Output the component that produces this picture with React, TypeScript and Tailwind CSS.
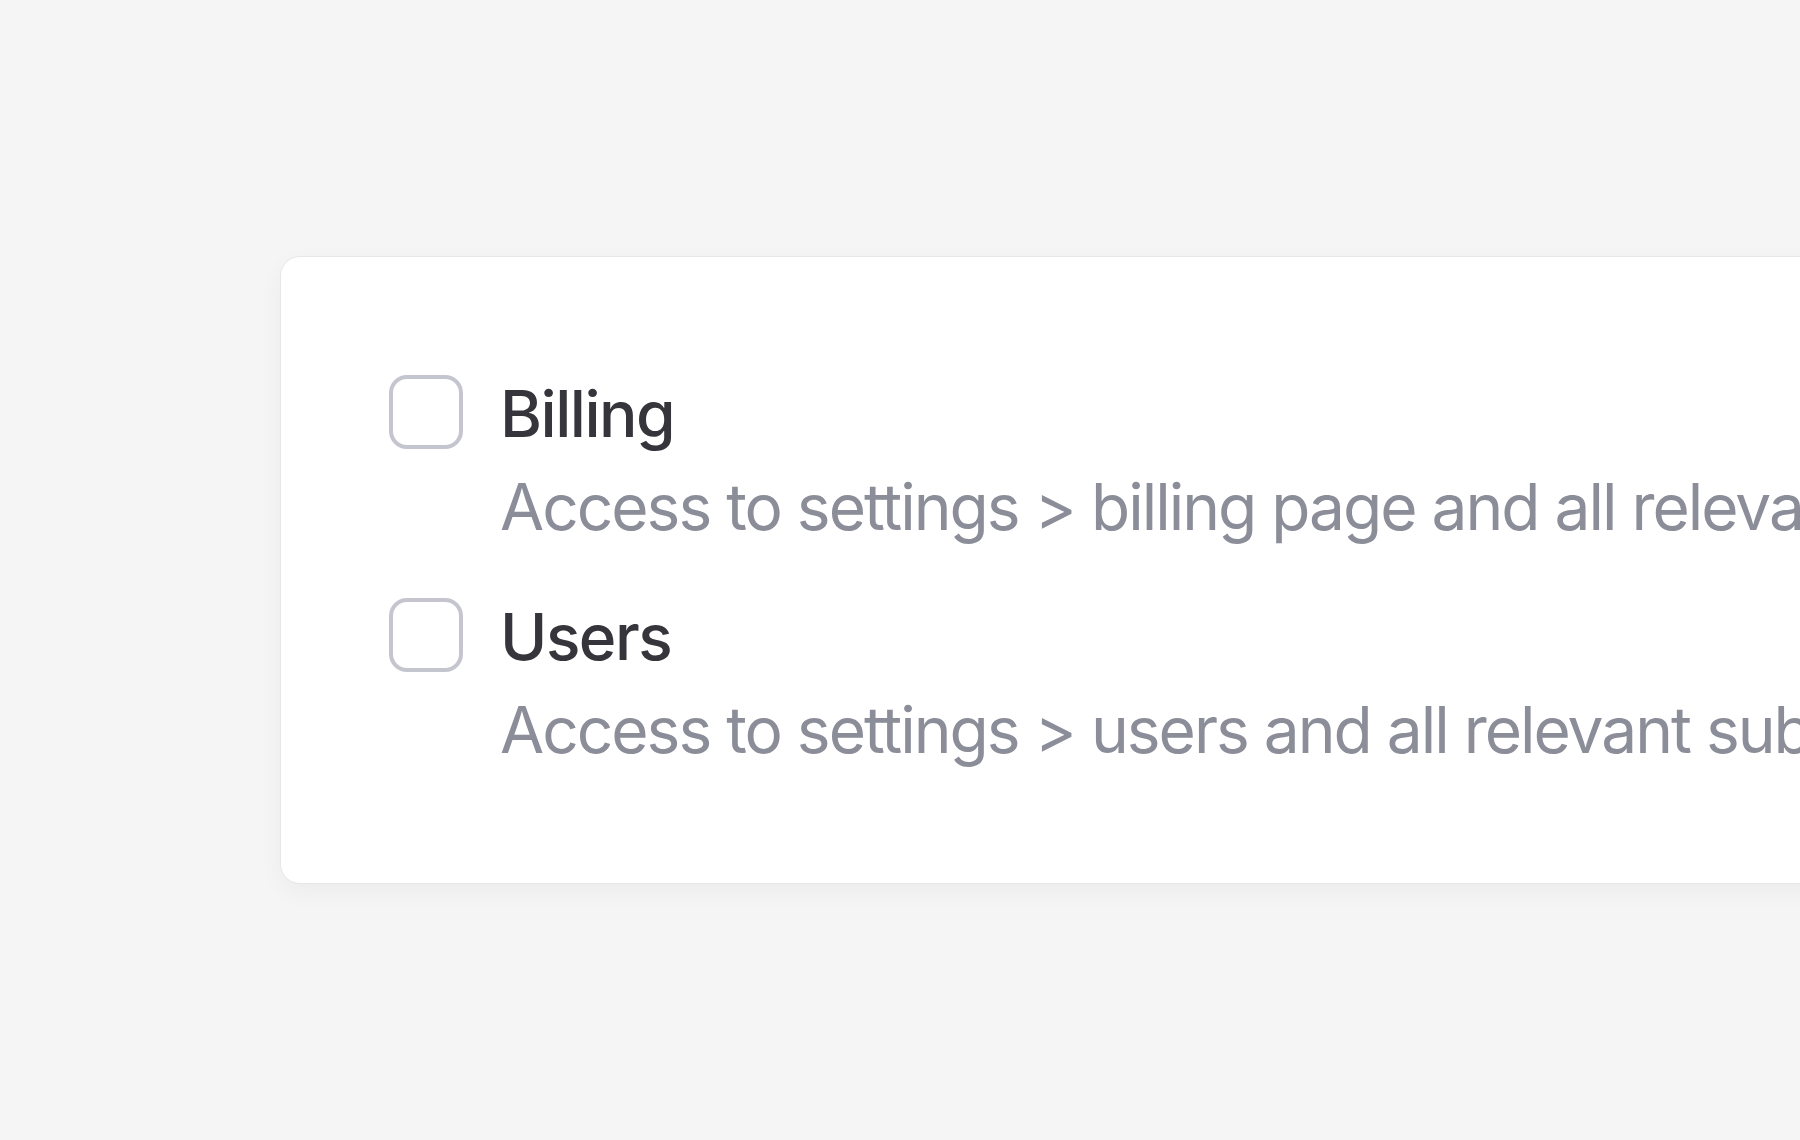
const permissions = [
  {
    title: 'Billing',
    description: 'Access to settings > billing page and all relevant subpages',
  },
  {
    title: 'Users',
    description: 'Access to settings > users and all relevant subpages',
  },
];

function PermissionRow({ title, description }: { title: string; description: string }) {
  return (
    <label className="flex items-start gap-[37px]">
      <span className="mt-[8px] h-[74px] w-[74px] shrink-0 rounded-[18px] border-[4px] border-[#c4c5cf] bg-white" />
      <span className="flex flex-col whitespace-nowrap">
        <span className="text-[64px] leading-[93px] font-medium tracking-[-1.5px] text-[#35353b]">{title}</span>
        <span className="text-[64px] leading-[93px] font-normal tracking-[-2px] text-[#8b8d98]">{description}</span>
      </span>
    </label>
  );
}

export default function App() {
  return (
    <div
      className="flex min-h-[1140px] w-full overflow-hidden bg-[#f5f5f5] pl-[280px] pt-[256px]"
      style={{ fontFamily: 'Inter, "Noto Sans", sans-serif' }}
    >
      <div className="flex h-[628px] w-[1700px] shrink-0 flex-col gap-[37px] rounded-[20px] border border-[#e7e7e7] bg-white pl-[108px] pt-[110px] shadow-[0_8px_24px_rgba(0,0,0,0.04)]">
        {permissions.map((p) => (
          <PermissionRow key={p.title} title={p.title} description={p.description} />
        ))}
      </div>
    </div>
  );
}
